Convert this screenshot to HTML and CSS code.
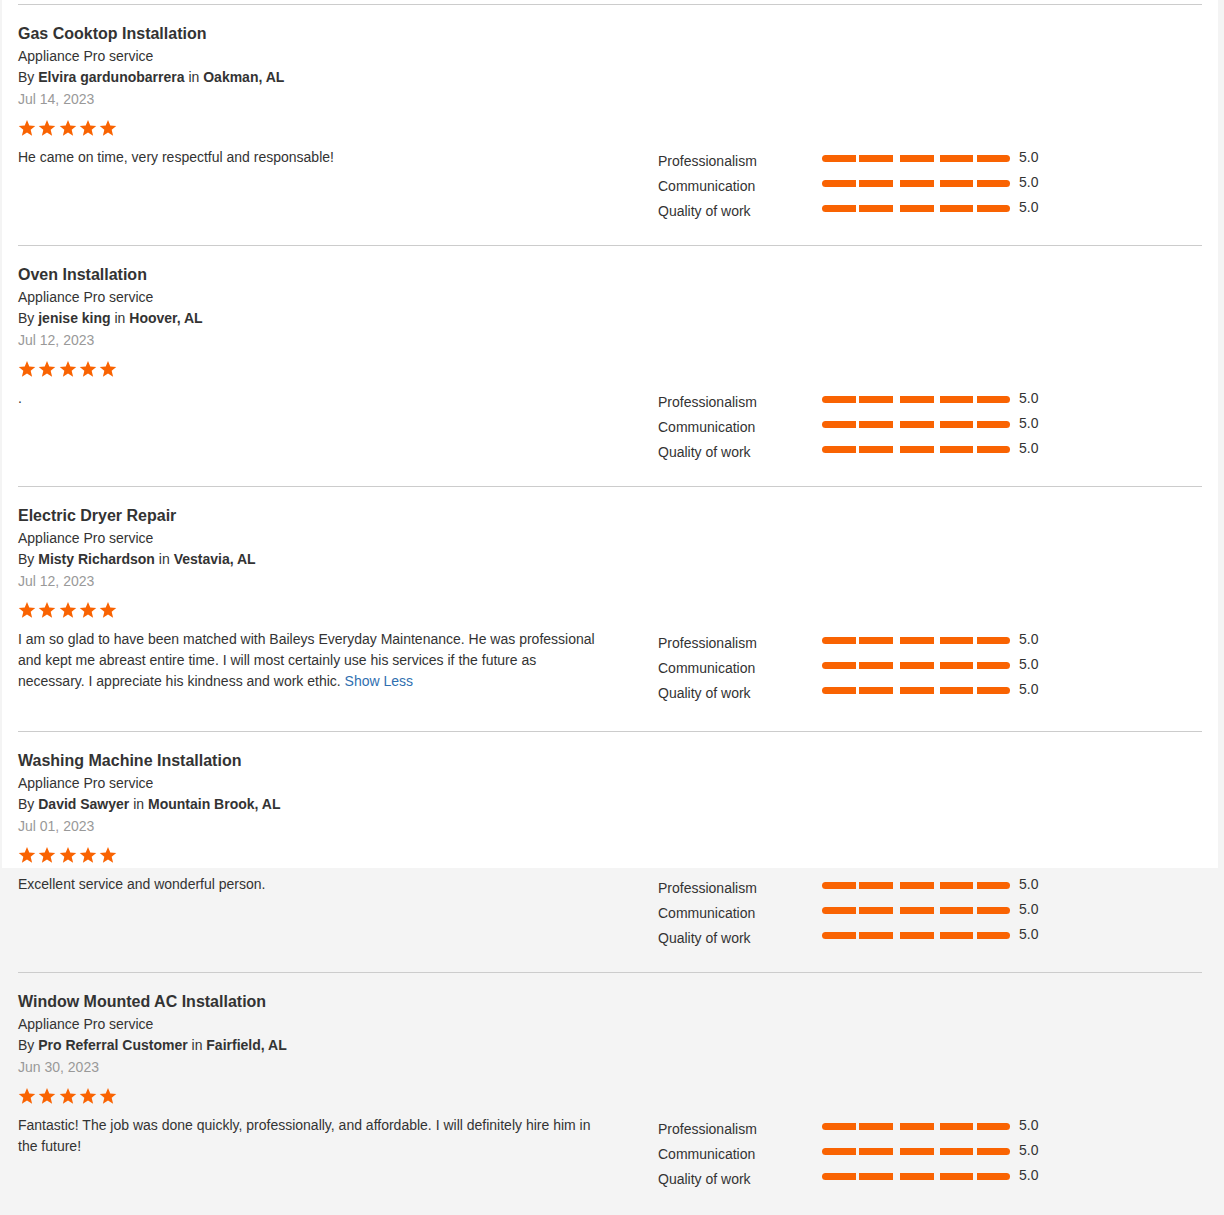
FILE: index.html
```html
<!DOCTYPE html>
<html lang="en">
<head>
<meta charset="utf-8">
<title>Reviews</title>
<link rel="stylesheet" href="styles.css">
</head>
<body>
<svg width="0" height="0" class="defs">
  <defs>
    <symbol id="star" viewBox="0 0 24 24">
      <polygon points="12,1.2 15,8.6 23,9.2 16.9,14.3 18.8,22.2 12,17.9 5.2,22.2 7.1,14.3 1,9.2 9,8.6"/>
    </symbol>
  </defs>
</svg>
<main class="panel">

  <section class="review">
    <h3 class="title">Gas Cooktop Installation</h3>
    <div class="sub">Appliance Pro service</div>
    <div class="by">By <b>Elvira gardunobarrera</b> in <b>Oakman, AL</b></div>
    <div class="date">Jul 14, 2023</div>
    <div class="stars"><svg><use href="#star"/></svg><svg><use href="#star"/></svg><svg><use href="#star"/></svg><svg><use href="#star"/></svg><svg><use href="#star"/></svg></div>
    <div class="body">
      <p class="text">He came on time, very respectful and responsable!</p>
      <div class="ratings">
        <div class="row"><span class="label">Professionalism</span><span class="bar"><i></i><i></i><i></i><i></i><i></i></span><span class="score">5.0</span></div>
        <div class="row"><span class="label">Communication</span><span class="bar"><i></i><i></i><i></i><i></i><i></i></span><span class="score">5.0</span></div>
        <div class="row"><span class="label">Quality of work</span><span class="bar"><i></i><i></i><i></i><i></i><i></i></span><span class="score">5.0</span></div>
      </div>
    </div>
  </section>

  <section class="review">
    <h3 class="title">Oven Installation</h3>
    <div class="sub">Appliance Pro service</div>
    <div class="by">By <b>jenise king</b> in <b>Hoover, AL</b></div>
    <div class="date">Jul 12, 2023</div>
    <div class="stars"><svg><use href="#star"/></svg><svg><use href="#star"/></svg><svg><use href="#star"/></svg><svg><use href="#star"/></svg><svg><use href="#star"/></svg></div>
    <div class="body">
      <p class="text">.</p>
      <div class="ratings">
        <div class="row"><span class="label">Professionalism</span><span class="bar"><i></i><i></i><i></i><i></i><i></i></span><span class="score">5.0</span></div>
        <div class="row"><span class="label">Communication</span><span class="bar"><i></i><i></i><i></i><i></i><i></i></span><span class="score">5.0</span></div>
        <div class="row"><span class="label">Quality of work</span><span class="bar"><i></i><i></i><i></i><i></i><i></i></span><span class="score">5.0</span></div>
      </div>
    </div>
  </section>

  <section class="review">
    <h3 class="title">Electric Dryer Repair</h3>
    <div class="sub">Appliance Pro service</div>
    <div class="by">By <b>Misty Richardson</b> in <b>Vestavia, AL</b></div>
    <div class="date">Jul 12, 2023</div>
    <div class="stars"><svg><use href="#star"/></svg><svg><use href="#star"/></svg><svg><use href="#star"/></svg><svg><use href="#star"/></svg><svg><use href="#star"/></svg></div>
    <div class="body">
      <p class="text">I am so glad to have been matched with Baileys Everyday Maintenance. He was professional and kept me abreast entire time. I will most certainly use his services if the future as necessary. I appreciate his kindness and work ethic. <a class="more" href="#">Show Less</a></p>
      <div class="ratings">
        <div class="row"><span class="label">Professionalism</span><span class="bar"><i></i><i></i><i></i><i></i><i></i></span><span class="score">5.0</span></div>
        <div class="row"><span class="label">Communication</span><span class="bar"><i></i><i></i><i></i><i></i><i></i></span><span class="score">5.0</span></div>
        <div class="row"><span class="label">Quality of work</span><span class="bar"><i></i><i></i><i></i><i></i><i></i></span><span class="score">5.0</span></div>
      </div>
    </div>
  </section>

  <section class="review">
    <h3 class="title">Washing Machine Installation</h3>
    <div class="sub">Appliance Pro service</div>
    <div class="by">By <b>David Sawyer</b> in <b>Mountain Brook, AL</b></div>
    <div class="date">Jul 01, 2023</div>
    <div class="stars"><svg><use href="#star"/></svg><svg><use href="#star"/></svg><svg><use href="#star"/></svg><svg><use href="#star"/></svg><svg><use href="#star"/></svg></div>
    <div class="body">
      <p class="text">Excellent service and wonderful person.</p>
      <div class="ratings">
        <div class="row"><span class="label">Professionalism</span><span class="bar"><i></i><i></i><i></i><i></i><i></i></span><span class="score">5.0</span></div>
        <div class="row"><span class="label">Communication</span><span class="bar"><i></i><i></i><i></i><i></i><i></i></span><span class="score">5.0</span></div>
        <div class="row"><span class="label">Quality of work</span><span class="bar"><i></i><i></i><i></i><i></i><i></i></span><span class="score">5.0</span></div>
      </div>
    </div>
  </section>

  <section class="review">
    <h3 class="title">Window Mounted AC Installation</h3>
    <div class="sub">Appliance Pro service</div>
    <div class="by">By <b>Pro Referral Customer</b> in <b>Fairfield, AL</b></div>
    <div class="date">Jun 30, 2023</div>
    <div class="stars"><svg><use href="#star"/></svg><svg><use href="#star"/></svg><svg><use href="#star"/></svg><svg><use href="#star"/></svg><svg><use href="#star"/></svg></div>
    <div class="body">
      <p class="text">Fantastic! The job was done quickly, professionally, and affordable. I will definitely hire him in the future!</p>
      <div class="ratings">
        <div class="row"><span class="label">Professionalism</span><span class="bar"><i></i><i></i><i></i><i></i><i></i></span><span class="score">5.0</span></div>
        <div class="row"><span class="label">Communication</span><span class="bar"><i></i><i></i><i></i><i></i><i></i></span><span class="score">5.0</span></div>
        <div class="row"><span class="label">Quality of work</span><span class="bar"><i></i><i></i><i></i><i></i><i></i></span><span class="score">5.0</span></div>
      </div>
    </div>
  </section>

</main>
</body>
</html>
```

FILE: styles.css
```css
html, body {
  margin: 0;
  padding: 0;
  background: #f4f4f4;
}

body {
  font-family: "Liberation Sans", Arial, sans-serif;
  font-size: 14px;
  color: #333;
}

.defs {
  position: absolute;
  width: 0;
  height: 0;
  overflow: hidden;
}

.panel {
  margin: 0 6px 0 2px;
  padding: 4px 16px 0;
  background: linear-gradient(to bottom, #fff 868px, #f4f4f4 868px);
}

.review {
  border-top: 1px solid #ccc;
  padding: 17px 0 25px;
}

.title {
  margin: 0;
  font-size: 16px;
  font-weight: bold;
  line-height: 24px;
  color: #333;
}

.sub,
.by {
  line-height: 21px;
}

.by b {
  font-weight: bold;
}

.date {
  line-height: 22px;
  color: #999;
}

.stars {
  display: flex;
  gap: 2.3px;
  margin-top: 9px;
  margin-bottom: 9px;
  height: 18px;
}

.stars svg {
  width: 18px;
  height: 18px;
  fill: #f96302;
}

.body {
  display: flex;
  align-items: flex-start;
}

.text {
  width: 585px;
  margin: 1px 0 14px;
  line-height: 21px;
}

.more {
  color: #2f6fb0;
  text-decoration: none;
}

.ratings {
  margin: -1px 0 0 55px;
}

.row {
  display: flex;
  align-items: flex-start;
  height: 25px;
}

.label {
  width: 164px;
  padding-top: 4px;
  line-height: 25px;
}

.bar {
  display: flex;
  margin-top: 10px;
  height: 7px;
}

.bar i {
  display: block;
  width: 34px;
  height: 7px;
  background: #f96302;
}

.bar i:nth-child(1) { border-radius: 4px 0 0 4px; }
.bar i:nth-child(2) { margin-left: 3px; }
.bar i:nth-child(3) { margin-left: 7px; }
.bar i:nth-child(4) { margin-left: 6px; width: 33px; }
.bar i:nth-child(5) { margin-left: 4px; width: 33px; border-radius: 0 4px 4px 0; }

.score {
  margin-left: 9px;
  line-height: 25px;
}
```
